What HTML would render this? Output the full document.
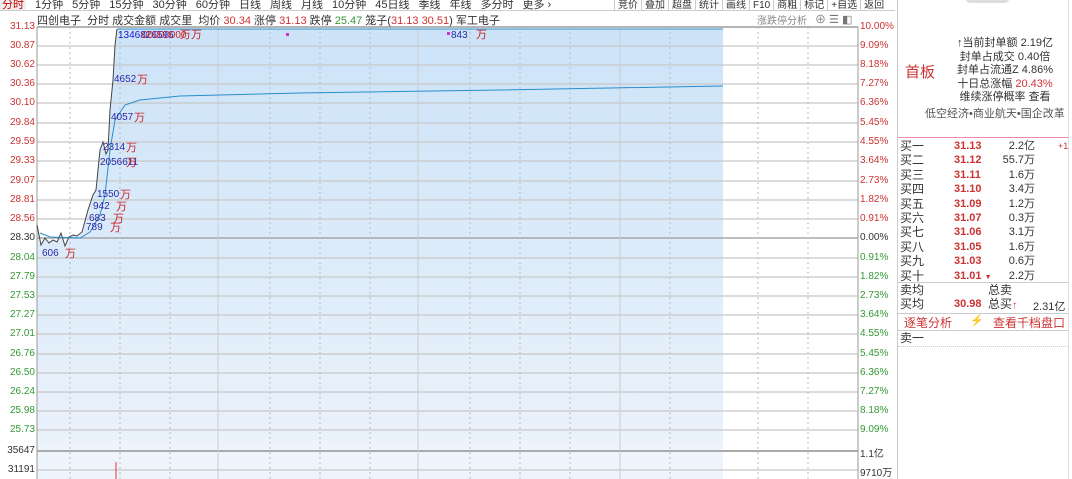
<!DOCTYPE html>
<html><head><meta charset="utf-8"><style>
*{margin:0;padding:0;box-sizing:border-box}
body{width:1072px;height:479px;overflow:hidden;background:#fff;font-family:"Liberation Sans","Noto Sans CJK SC",sans-serif;position:relative;font-size:11px;color:#333}
.a{position:absolute;white-space:nowrap}
.tabs{position:absolute;left:0;top:-4px;height:14px;width:610px;font-size:11px;color:#333;white-space:nowrap}
.tabs span{margin-right:9px}
.btns{position:absolute;left:615px;top:-4px;font-size:10px;white-space:nowrap}
.btns span{display:inline-block;border-left:1px solid #ccc;padding:0 3px}
.lax{position:absolute;left:0;width:35px;text-align:right;font-size:10px}
.rax{position:absolute;left:860px;font-size:10px}
.r{color:#c33}.g{color:#393}
.ob{position:absolute;left:900px;font-size:12px;line-height:14.4px}
</style></head><body>
<div class="tabs"><span style="color:#c00;background:#eee;padding:0 2px">分时</span><span>1分钟</span><span>5分钟</span><span>15分钟</span><span>30分钟</span><span>60分钟</span><span>日线</span><span>周线</span><span>月线</span><span>10分钟</span><span>45日线</span><span>季线</span><span>年线</span><span>多分时</span><span>更多 ›</span></div>
<div class="btns" style="left:614px"><span>竞价</span><span>叠加</span><span>超盘</span><span>统计</span><span>画线</span><span>F10</span><span>商粗</span><span>标记</span><span>+自选</span><span>返回</span></div>
<div class="a" style="left:0;top:10px;width:895px;border-top:1px solid #ccc"></div>
<div class="a" style="left:37px;top:12px;font-size:11px">四创电子&nbsp; 分时 成交金额 成交里&nbsp; 均价 <span class="r">30.34</span> 涨停 <span class="r">31.13</span> 跌停 <span class="g">25.47</span> 笼子(<span class="r">31.13 30.51</span>) 军工电子</div>
<div class="a" style="left:757px;top:12px;font-size:10px;color:#888">涨跌停分析</div>
<div class="a" style="left:815px;top:11px;font-size:11px;color:#777">⊕ ☰ ◧</div>
<svg class="a" style="left:0;top:0" width="895" height="479">
<defs><linearGradient id="bg" x1="0" y1="0" x2="0" y2="1"><stop offset="0" stop-color="#cce3f8"/><stop offset="1" stop-color="#eaf2fb"/></linearGradient></defs>
<polygon fill="url(#bg)" points="37,225 41,245 45,238 49,243 53,240 57,242 61,233 65,246 69,237 73,235 77,236 82,232 88,210 93,195 96,190 100,150 103,142 106,154 108,150 110,110 113,80 115,45 117,29 723,29 723,442 37,442"/>
<rect x="37" y="442" width="686" height="37" fill="#edf4fc"/>
<g stroke="#c8c8c8" stroke-width="1.2">
<line x1="37" y1="27" x2="858" y2="27" stroke="#888"/>
<line x1="37" y1="46" x2="858" y2="46"/><line x1="37" y1="65" x2="858" y2="65"/><line x1="37" y1="84" x2="858" y2="84"/><line x1="37" y1="103" x2="858" y2="103"/><line x1="37" y1="123" x2="858" y2="123"/><line x1="37" y1="142" x2="858" y2="142"/><line x1="37" y1="161" x2="858" y2="161"/><line x1="37" y1="181" x2="858" y2="181"/><line x1="37" y1="200" x2="858" y2="200"/><line x1="37" y1="219" x2="858" y2="219"/><line x1="37" y1="238" x2="858" y2="238" stroke="#999"/><line x1="37" y1="258" x2="858" y2="258"/><line x1="37" y1="277" x2="858" y2="277"/><line x1="37" y1="296" x2="858" y2="296"/><line x1="37" y1="315" x2="858" y2="315"/><line x1="37" y1="334" x2="858" y2="334"/><line x1="37" y1="354" x2="858" y2="354"/><line x1="37" y1="373" x2="858" y2="373"/><line x1="37" y1="392" x2="858" y2="392"/><line x1="37" y1="411" x2="858" y2="411"/><line x1="37" y1="430" x2="858" y2="430"/>
<line x1="37" y1="451" x2="858" y2="451" stroke="#aaa" stroke-width="2"/><line x1="37" y1="470" x2="858" y2="470"/>
</g>
<g stroke="#bbb" stroke-dasharray="2,3"><line x1="70" y1="27" x2="70" y2="479"/><line x1="120" y1="27" x2="120" y2="479"/><line x1="170" y1="27" x2="170" y2="479"/><line x1="270" y1="27" x2="270" y2="479"/><line x1="320" y1="27" x2="320" y2="479"/><line x1="370" y1="27" x2="370" y2="479"/><line x1="470" y1="27" x2="470" y2="479"/><line x1="520" y1="27" x2="520" y2="479"/><line x1="570" y1="27" x2="570" y2="479"/><line x1="670" y1="27" x2="670" y2="479"/><line x1="758" y1="27" x2="758" y2="479"/><line x1="808" y1="27" x2="808" y2="479"/></g>
<g stroke="#ccc"><line x1="218" y1="27" x2="218" y2="479"/><line x1="418" y1="27" x2="418" y2="479"/><line x1="620" y1="27" x2="620" y2="479"/></g>
<line x1="37" y1="27" x2="37" y2="479" stroke="#999"/><line x1="858" y1="27" x2="858" y2="479" stroke="#999"/>
<polyline fill="none" stroke="#444" stroke-width="1" points="37,225 41,245 45,238 49,243 53,240 57,242 61,233 65,246 69,237 73,235 77,236 82,232 88,210 93,195 96,190 100,150 103,142 106,154 108,150 110,110 113,80 115,45 117,29"/>
<polyline fill="none" stroke="#2a8ccc" stroke-width="1" points="40,233 50,237 80,238 90,232 100,215 105,195 110,150 115,120 125,105 140,100 180,96 300,93 500,90 723,86"/>
<line x1="117" y1="29" x2="723" y2="29" stroke="#2a8ccc"/>
<line x1="116" y1="462" x2="116" y2="479" stroke="#e33"/>
<rect x="286" y="33" width="3" height="3" fill="#c3c"/><rect x="447" y="32" width="3" height="3" fill="#c3c"/>
<g font-size="10" font-family="Liberation Sans,Noto Sans CJK SC,sans-serif">
<text x="118" y="38" fill="#1a1acc">1346826596</text><text x="142" y="38" fill="#c22">00000000</text><text x="180" y="38" fill="#c22" font-size="11">万万</text>
<text x="451" y="38" fill="#2a2aaa">843</text><text x="476" y="38" fill="#c22" font-size="11">万</text>
<text x="114" y="82" fill="#2a2aaa">4652</text><text x="137" y="83" fill="#c22" font-size="11">万</text>
<text x="111" y="120" fill="#2a2aaa">4057</text><text x="134" y="121" fill="#c22" font-size="11">万</text>
<text x="103" y="150" fill="#2a2aaa">2314</text><text x="126" y="151" fill="#c22" font-size="11">万</text>
<text x="100" y="165" fill="#2a2aaa">2056611</text><text x="126" y="166" fill="#c22" font-size="11">万</text>
<text x="97" y="197" fill="#2a2aaa">1550</text><text x="120" y="198" fill="#c22" font-size="11">万</text>
<text x="93" y="209" fill="#2a2aaa">942</text><text x="116" y="210" fill="#c22" font-size="11">万</text>
<text x="89" y="221" fill="#2a2aaa">683</text><text x="113" y="222" fill="#c22" font-size="11">万</text>
<text x="86" y="230" fill="#2a2aaa">789</text><text x="110" y="231" fill="#c22" font-size="11">万</text>
<text x="42" y="256" fill="#2a2aaa">606</text><text x="65" y="257" fill="#c22" font-size="11">万</text>
</g>
</svg>
<div class="lax r" style="top:21px">31.13</div><div class="lax r" style="top:40px">30.87</div><div class="lax r" style="top:59px">30.62</div><div class="lax r" style="top:78px">30.36</div><div class="lax r" style="top:97px">30.10</div><div class="lax r" style="top:117px">29.84</div><div class="lax r" style="top:136px">29.59</div><div class="lax r" style="top:155px">29.33</div><div class="lax r" style="top:175px">29.07</div><div class="lax r" style="top:194px">28.81</div><div class="lax r" style="top:213px">28.56</div><div class="lax" style="top:232px">28.30</div><div class="lax g" style="top:252px">28.04</div><div class="lax g" style="top:271px">27.79</div><div class="lax g" style="top:290px">27.53</div><div class="lax g" style="top:309px">27.27</div><div class="lax g" style="top:328px">27.01</div><div class="lax g" style="top:348px">26.76</div><div class="lax g" style="top:367px">26.50</div><div class="lax g" style="top:386px">26.24</div><div class="lax g" style="top:405px">25.98</div><div class="lax g" style="top:424px">25.73</div><div class="lax" style="top:445px">35647</div><div class="lax" style="top:464px">31191</div>
<div class="rax r" style="top:21px">10.00%</div><div class="rax r" style="top:40px">9.09%</div><div class="rax r" style="top:59px">8.18%</div><div class="rax r" style="top:78px">7.27%</div><div class="rax r" style="top:97px">6.36%</div><div class="rax r" style="top:117px">5.45%</div><div class="rax r" style="top:136px">4.55%</div><div class="rax r" style="top:155px">3.64%</div><div class="rax r" style="top:175px">2.73%</div><div class="rax r" style="top:194px">1.82%</div><div class="rax r" style="top:213px">0.91%</div><div class="rax" style="top:232px">0.00%</div><div class="rax g" style="top:252px">0.91%</div><div class="rax g" style="top:271px">1.82%</div><div class="rax g" style="top:290px">2.73%</div><div class="rax g" style="top:309px">3.64%</div><div class="rax g" style="top:328px">4.55%</div><div class="rax g" style="top:348px">5.45%</div><div class="rax g" style="top:367px">6.36%</div><div class="rax g" style="top:386px">7.27%</div><div class="rax g" style="top:405px">8.18%</div><div class="rax g" style="top:424px">9.09%</div><div class="rax" style="top:445px">1.1亿</div><div class="rax" style="top:464px">9710万</div>
<div class="a" style="left:897px;top:0;width:1px;height:479px;background:#ccc"></div>
<div class="a" style="left:1068px;top:0;width:1px;height:479px;background:#ddd"></div>
<div class="a" style="left:965px;top:-4px;width:45px;height:7px;background:#ddd;border-radius:0 0 6px 6px"></div>
<div class="a" style="left:905px;top:61px;font-size:15px;color:#c33">首板</div>
<div class="a" style="left:950px;top:37px;font-size:11px;line-height:13.6px;text-align:center;width:110px">↑当前封单额 2.19亿<br>封单占成交 0.40倍<br>封单占流通Z 4.86%<br>十日总涨幅 <span class="r">20.43%</span><br>维续涨停概率 查看</div>
<div class="a" style="left:925px;top:105px;font-size:11px;color:#555">低空经济•商业航天•国企改革</div>
<div class="a" style="left:898px;top:137px;width:170px;height:1px;background:#e8a"></div>
<div class="ob" style="top:139px">买一<br>买二<br>买三<br>买四<br>买五<br>买六<br>买七<br>买八<br>买九<br>买十</div>
<div class="ob r" style="left:954px;top:139px;font-weight:bold;font-size:11px">31.13<br>31.12<br>31.11<br>31.10<br>31.09<br>31.07<br>31.06<br>31.05<br>31.03<br>31.01 <span style="font-size:7px">▼</span></div>
<div class="ob" style="left:990px;top:139px;width:45px;text-align:right;font-size:11px">2.2亿<br>55.7万<br>1.6万<br>3.4万<br>1.2万<br>0.3万<br>3.1万<br>1.6万<br>0.6万<br>2.2万</div>
<div class="a r" style="left:1058px;top:141px;font-size:9px">+1</div>
<div class="a" style="left:898px;top:282px;width:170px;border-top:1px solid #ccc"></div>
<div class="ob" style="top:283px">卖均<br>买均</div>
<div class="ob" style="left:988px;top:283px">总卖<br>总买<span class="r" style="font-size:10px">↑</span></div>
<div class="a r" style="left:954px;top:298px;font-weight:bold;font-size:11px">30.98</div>
<div class="a" style="left:1033px;top:298px;font-size:11px">2.31亿</div>
<div class="a" style="left:898px;top:313px;width:170px;border-top:1px solid #ccc"></div>
<div class="a r" style="left:904px;top:314px;font-size:12px">逐笔分析</div>
<div class="a" style="left:970px;top:314px;font-size:11px;color:#ec4">⚡</div>
<div class="a r" style="left:993px;top:314px;font-size:12px">查看千档盘口</div>
<div class="a" style="left:898px;top:330px;width:170px;border-top:1px solid #ccc"></div>
<div class="ob" style="top:331px">卖一</div>
<div class="a" style="left:898px;top:346px;width:170px;border-top:1px dotted #ccc"></div>
</body></html>
